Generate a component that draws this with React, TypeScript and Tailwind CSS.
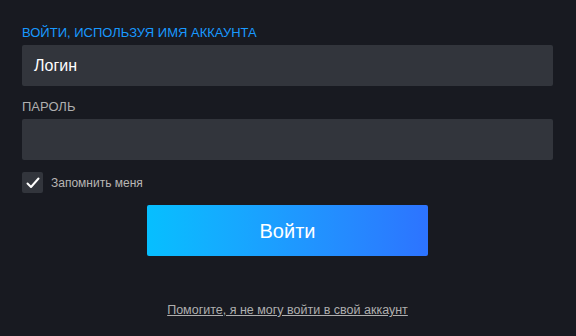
import React from "react";

export default function App() {
  return (
    <div className="w-[576px] h-[336px] bg-[#181a21] overflow-hidden" style={{ fontFamily: '"Liberation Sans", Arial, sans-serif' }}>
      <div className="pl-[22px] pr-[23px] pt-[25px] flex flex-col">
        <div className="text-[13px] leading-[16px] text-[#1999ff] uppercase">Войти, используя имя аккаунта</div>
        <div className="mt-[4px] h-[41px] rounded-[2px] bg-[#32353c] flex items-center px-[12px] text-[16px] text-white">Логин</div>
        <div className="mt-[13px] text-[13px] leading-[16px] text-[#afafaf] uppercase">Пароль</div>
        <div className="mt-[4px] h-[41px] rounded-[2px] bg-[#32353c]"></div>
        <div className="mt-[12px] flex items-center gap-[8px]">
          <div className="w-[21px] h-[21px] rounded-[2px] bg-[#32353c] flex items-center justify-center">
            <svg width="14" height="12" viewBox="0 0 14 12" fill="none">
              <path d="M1.5 6.5 L5 10 L12.5 1.5" stroke="white" strokeWidth="2" strokeLinecap="round" strokeLinejoin="round" />
            </svg>
          </div>
          <span className="text-[12px] text-[#b8b6b4]">Запомнить меня</span>
        </div>
        <div className="mt-[12px] flex justify-center">
          <button className="w-[281px] h-[51px] rounded-[2px] bg-gradient-to-r from-[#06bfff] to-[#2d73ff] text-white text-[20px]">Войти</button>
        </div>
        <div className="mt-[45px] flex justify-center">
          <a className="text-[12.5px] text-[#afafaf] underline">Помогите, я не могу войти в свой аккаунт</a>
        </div>
      </div>
    </div>
  );
}
